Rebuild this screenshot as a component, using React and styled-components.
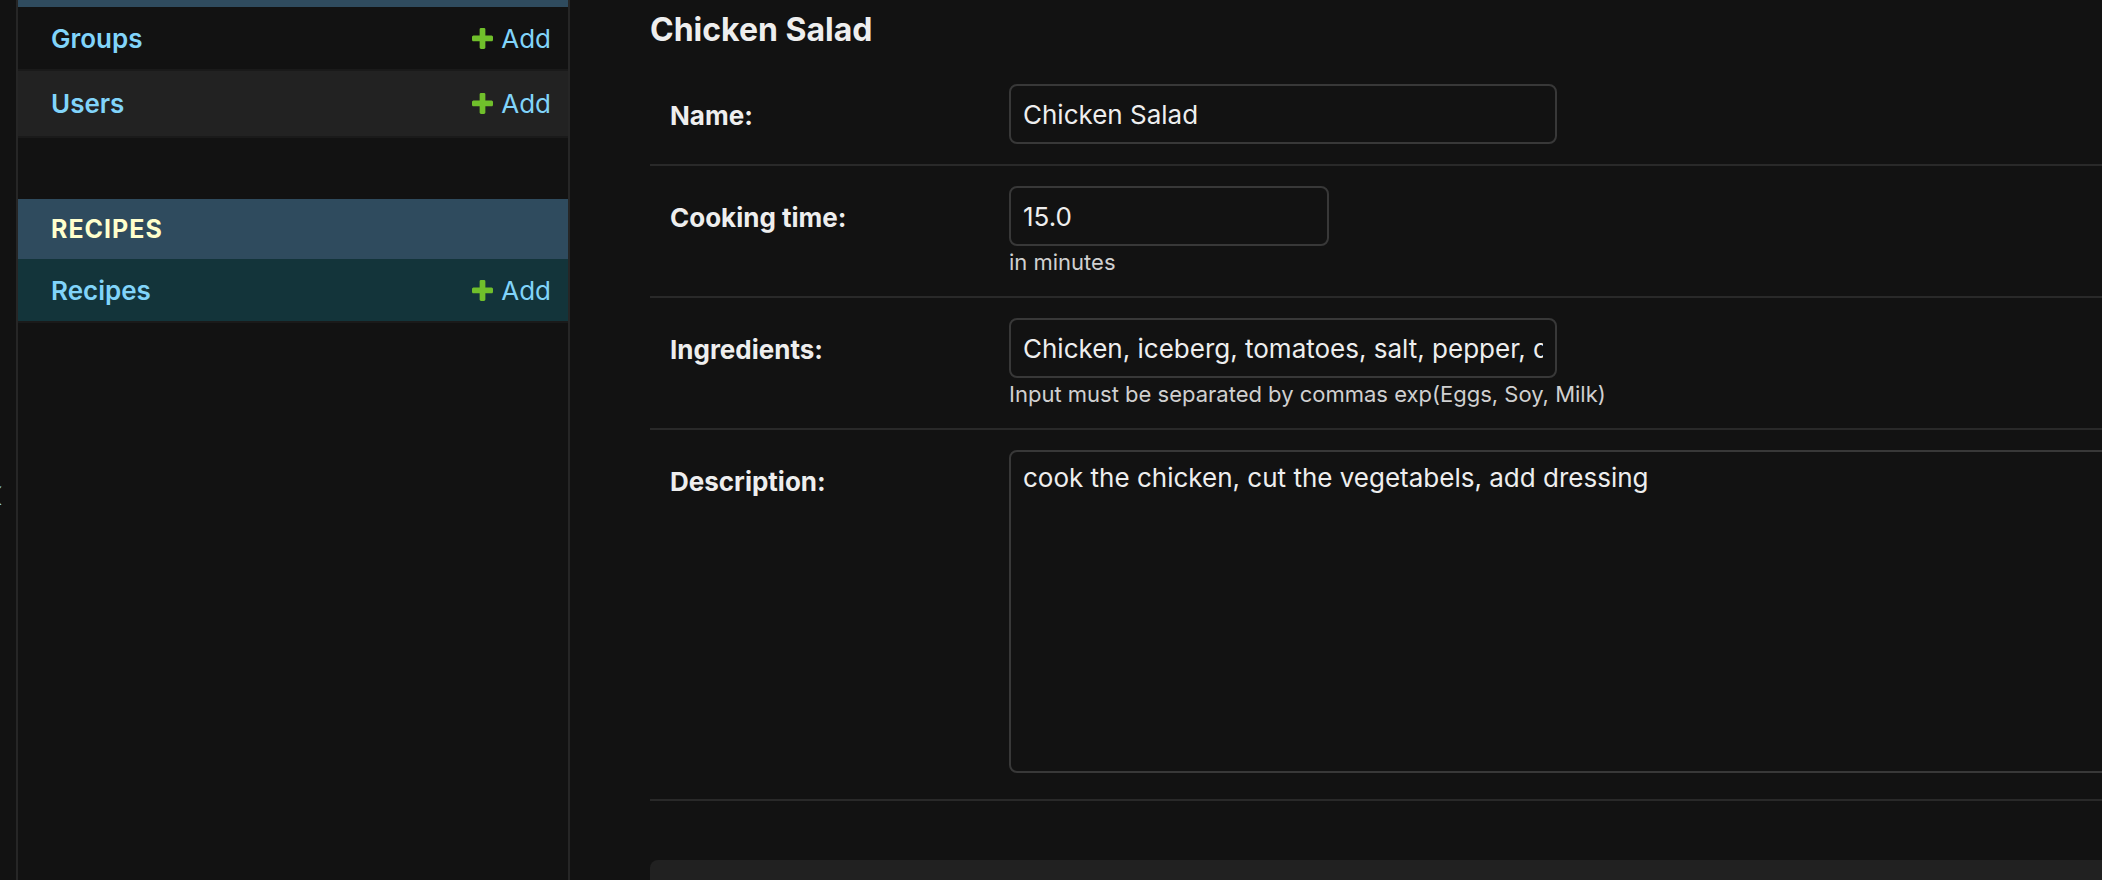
import styled, { createGlobalStyle } from "styled-components";

const GlobalStyle = createGlobalStyle`
  html, body {
    margin: 0;
    padding: 0;
    background: #121212;
    overflow: hidden;
  }
  body {
    font-family: Inter, "Noto Sans", sans-serif;
    color: #eeeeee;
  }
  * {
    box-sizing: border-box;
  }
`;

const Page = styled.div`
  display: flex;
  width: 2102px;
  height: 880px;
  overflow: hidden;
  background: #121212;
`;

// Sidebar
const Toggle = styled.div`
  flex: 0 0 18px;
  display: flex;
  justify-content: flex-end;
  align-items: flex-start;
  padding-top: 470px;
  border-right: 2px solid #262626;
  overflow: hidden;
`;

const ToggleGlyph = styled.span`
  font-size: 40px;
  line-height: 48px;
  color: #81d4fa;
  margin-right: 13px;
  white-space: nowrap;
`;

const Sidebar = styled.nav`
  flex: 0 0 552px;
  border-right: 2px solid #262626;
  display: flex;
  flex-direction: column;
`;

const Module = styled.div`
  margin-bottom: ${(p) => p.$gap || 0}px;
`;

const Caption = styled.div`
  height: ${(p) => p.$height || 60}px;
  display: flex;
  align-items: center;
  padding-left: 33px;
  background: #2f4b5e;
  color: #ffffcc;
  font-size: 25px;
  font-weight: 700;
  letter-spacing: 1px;
  text-transform: uppercase;
  overflow: hidden;
`;

const ModelRow = styled.div`
  height: ${(p) => p.$height || 64}px;
  display: flex;
  align-items: center;
  justify-content: space-between;
  padding: 0 17px 0 33px;
  border-bottom: 2px solid #1a1a1a;
  background: ${(p) =>
    p.$current ? "#13343a" : p.$shade ? "#222222" : "#121212"};
`;

const ModelLink = styled.a`
  color: #81d4fa;
  font-size: 26px;
  font-weight: 600;
  text-decoration: none;
`;

const AddLink = styled.a`
  display: inline-flex;
  align-items: center;
  gap: 8px;
  color: #81d4fa;
  font-size: 26px;
  font-weight: 400;
  text-decoration: none;
`;

const PlusIcon = () => (
  <svg width="21" height="21" viewBox="192 192 1408 1408">
    <path
      fill="#70bf2b"
      d="M1600 796v192q0 40-28 68t-68 28h-416v416q0 40-28 68t-68 28h-192q-40 0-68-28t-28-68v-416h-416q-40 0-68-28t-28-68v-192q0-40 28-68t68-28h416v-416q0-40 28-68t68-28h192q40 0 68 28t28 68v416h416q40 0 68 28t28 68z"
    />
  </svg>
);

// Main content
const Main = styled.main`
  flex: 1 1 auto;
  min-width: 0;
  padding-left: 80px;
  overflow: hidden;
`;

const Title = styled.h2`
  margin: 11px 0 15px;
  font-size: 32px;
  line-height: 38px;
  font-weight: 700;
  color: #eeeeee;
`;

const FormRow = styled.div`
  display: flex;
  padding: 20px;
  border-bottom: 2px solid #292929;
`;

const Label = styled.label`
  flex: 0 0 339px;
  padding-top: 13px;
  font-size: 26px;
  line-height: 38px;
  font-weight: 700;
  color: #eeeeee;
`;

const Field = styled.div`
  display: flex;
  flex-direction: column;
  min-width: 0;
`;

const Input = styled.input`
  width: ${(p) => p.$width || 548}px;
  height: 60px;
  padding: 0 12px;
  border: 2px solid #383838;
  border-radius: 8px;
  background: #121212;
  color: #eeeeee;
  font-family: Inter, "Noto Sans", sans-serif;
  font-size: 26px;
  outline: none;
`;

const Help = styled.div`
  margin-top: 2px;
  font-size: 22px;
  line-height: 28px;
  color: #d0d0d0;
`;

const TextArea = styled.textarea`
  display: block;
  width: 1220px;
  height: 323px;
  margin-bottom: 6px;
  padding: 8px 12px;
  border: 2px solid #383838;
  border-radius: 8px;
  background: #121212;
  color: #eeeeee;
  font-family: Inter, "Noto Sans", sans-serif;
  font-size: 26px;
  line-height: 36px;
  resize: none;
  outline: none;
`;

const SubmitRow = styled.div`
  margin-top: 59px;
  height: 120px;
  background: #212121;
  border-radius: 8px 0 0 0;
`;

export default function App() {
  return (
    <>
      <GlobalStyle />
      <Page>
        <Toggle>
          <ToggleGlyph>«</ToggleGlyph>
        </Toggle>
        <Sidebar>
          <Module $gap={61}>
            <Caption $height={7} />
            <ModelRow>
              <ModelLink href="#">Groups</ModelLink>
              <AddLink href="#">
                <PlusIcon />
                Add
              </AddLink>
            </ModelRow>
            <ModelRow $shade $height={67}>
              <ModelLink href="#">Users</ModelLink>
              <AddLink href="#">
                <PlusIcon />
                Add
              </AddLink>
            </ModelRow>
          </Module>
          <Module>
            <Caption>Recipes</Caption>
            <ModelRow $current>
              <ModelLink href="#">Recipes</ModelLink>
              <AddLink href="#">
                <PlusIcon />
                Add
              </AddLink>
            </ModelRow>
          </Module>
        </Sidebar>
        <Main>
          <Title>Chicken Salad</Title>
          <FormRow>
            <Label>Name:</Label>
            <Field>
              <Input defaultValue="Chicken Salad" />
            </Field>
          </FormRow>
          <FormRow>
            <Label>Cooking time:</Label>
            <Field>
              <Input $width={320} defaultValue="15.0" />
              <Help>in minutes</Help>
            </Field>
          </FormRow>
          <FormRow>
            <Label>Ingredients:</Label>
            <Field>
              <Input defaultValue="Chicken, iceberg, tomatoes, salt, pepper, dressing" />
              <Help>Input must be separated by commas exp(Eggs, Soy, Milk)</Help>
            </Field>
          </FormRow>
          <FormRow>
            <Label>Description:</Label>
            <Field>
              <TextArea defaultValue="cook the chicken, cut the vegetabels, add dressing" />
            </Field>
          </FormRow>
          <SubmitRow />
        </Main>
      </Page>
    </>
  );
}
